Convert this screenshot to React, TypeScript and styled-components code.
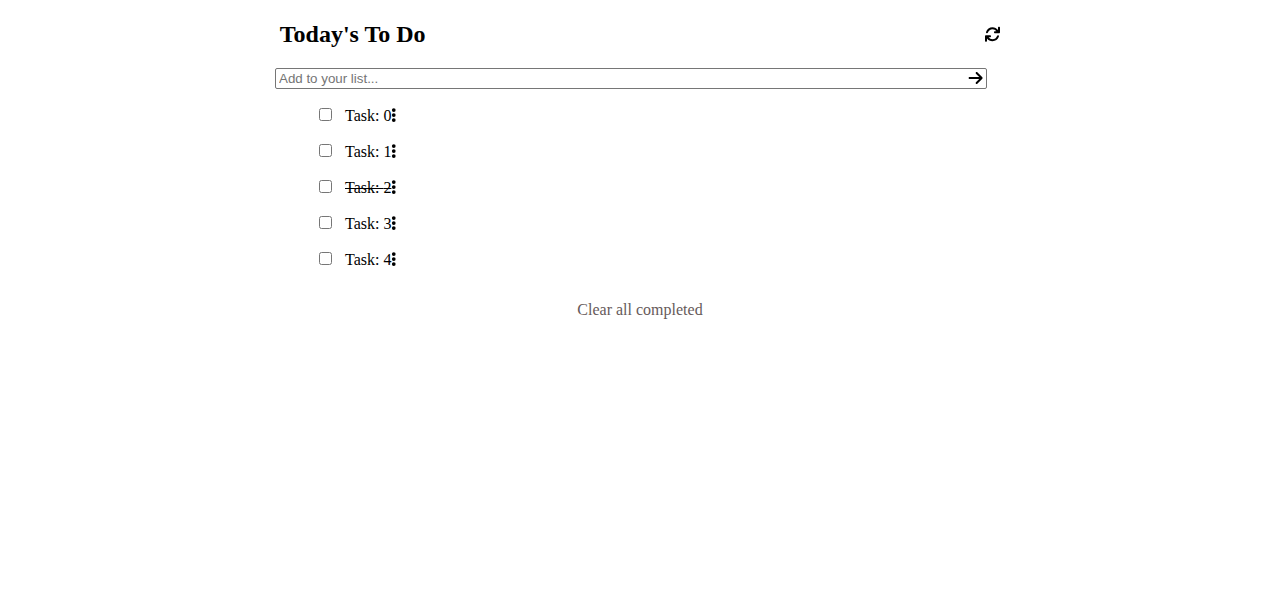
import React from 'react';
import styled, { createGlobalStyle } from 'styled-components';

const GlobalStyle = createGlobalStyle`
  body {
    margin: 0;
    background: #fff;
    color: #000;
    font-family: "Liberation Serif", serif;
    font-size: 16px;
  }
`;

const Page = styled.main`
  display: flex;
  flex-direction: column;
  width: 730px;
  margin: 0 auto;
`;

const Header = styled.header`
  display: flex;
  align-items: center;
  justify-content: space-between;
  height: 68px;
  padding: 0 5px 0 4.75px;
  box-sizing: border-box;
`;

const Title = styled.h1`
  margin: 0;
  font-size: 24px;
  line-height: 27px;
`;

const Icon = styled.svg<{ $width: number }>`
  display: block;
  flex: none;
  width: ${({ $width }) => $width}px;
  height: 16px;
  fill: currentColor;
`;

const Entry = styled.form`
  display: flex;
  align-items: center;
`;

const EntryInput = styled.input`
  box-sizing: border-box;
  width: 712px;
  height: 21px;
  margin: 0;
  padding: 1px 2px 1px 3px;
  border: 1px solid #767676;
  border-radius: 2px;
  font: 13.333px "Liberation Sans", sans-serif;
  &::placeholder {
    color: #757575;
  }
`;

const Submit = styled.button`
  display: flex;
  margin: 0 0 1px -19px;
  padding: 0;
  border: 0;
  background: none;
  color: #000;
`;

const TaskList = styled.ul`
  display: flex;
  flex-direction: column;
  gap: 18px;
  margin: 18px 0 0;
  padding: 0 0 0 40px;
  list-style: none;
`;

const TaskRow = styled.li`
  display: flex;
  align-items: center;
  height: 18px;
`;

const Check = styled.input`
  width: 13px;
  height: 13px;
  margin: 0 13px 3px 4px;
`;

const TaskName = styled.span<{ $done: boolean }>`
  line-height: 18px;
  text-decoration: ${({ $done }) => ($done ? 'line-through' : 'none')};
`;

const Dots = styled(Icon)`
  margin-bottom: 2px;
`;

const Clear = styled.button`
  align-self: center;
  margin: 32px 0 0;
  padding: 0;
  border: 0;
  background: none;
  color: #665a5a;
  font: 16px/18px "Liberation Serif", serif;
`;

const tasks = [0, 1, 2, 3, 4].map((id) => ({ id, done: id === 2 }));

export default function App() {
  return (
    <>
      <GlobalStyle />
      <Page>
        <Header>
          <Title>Today's To Do</Title>
          <Icon $width={16} viewBox="-16 -8 512 512" overflow="visible" aria-hidden="true">
            <path d="M464 16c-17.67 0-32 14.31-32 32v74.09C392.1 66.52 327.4 32 256 32C161.5 32 78.59 92.34 49.58 182.2c-5.438 16.81 3.797 34.88 20.61 40.28c16.89 5.5 34.88-3.812 40.3-20.59C130.9 138.5 189.4 96 256 96c50.5 0 96.26 24.55 124.4 64H336c-17.67 0-32 14.31-32 32s14.33 32 32 32h128c17.67 0 32-14.31 32-32V48C496 30.31 481.7 16 464 16zM441.8 289.6c-16.92-5.438-34.88 3.812-40.3 20.59C381.1 373.5 322.6 416 256 416c-50.5 0-96.25-24.55-124.4-64H176c17.67 0 32-14.31 32-32s-14.33-32-32-32h-128c-17.67 0-32 14.31-32 32v144c0 17.69 14.33 32 32 32s32-14.31 32-32v-74.09C119.9 445.5 184.6 480 255.1 480c94.45 0 177.4-60.34 206.4-150.2C467.9 313 458.6 294.1 441.8 289.6z" />
          </Icon>
        </Header>
        <Entry>
          <EntryInput placeholder="Add to your list..." />
          <Submit type="button" aria-label="Add">
            <Icon $width={16} viewBox="-20 0 512 512" aria-hidden="true">
              <path d="M438.6 278.6l-160 160C272.4 444.9 264.2 448 256 448s-16.38-3.125-22.62-9.375c-12.5-12.5-12.5-32.75 0-45.25L338.8 288H32C14.33 288 0 273.7 0 256S14.33 224 32 224h306.8l-105.4-105.4c-12.5-12.5-12.5-32.75 0-45.25s32.75-12.5 45.25 0l160 160C451.1 245.9 451.1 266.1 438.6 278.6z" />
            </Icon>
          </Submit>
        </Entry>
        <TaskList>
          {tasks.map(({ id, done }) => (
            <TaskRow key={id}>
              <Check type="checkbox" />
              <TaskName $done={done}>Task: {id}</TaskName>
              <Dots $width={6} viewBox="-16 0 192 512" aria-hidden="true">
                <circle cx="72" cy="96" r="60" />
                <circle cx="72" cy="256" r="60" />
                <circle cx="72" cy="416" r="60" />
              </Dots>
            </TaskRow>
          ))}
        </TaskList>
        <Clear type="button">Clear all completed</Clear>
      </Page>
    </>
  );
}
